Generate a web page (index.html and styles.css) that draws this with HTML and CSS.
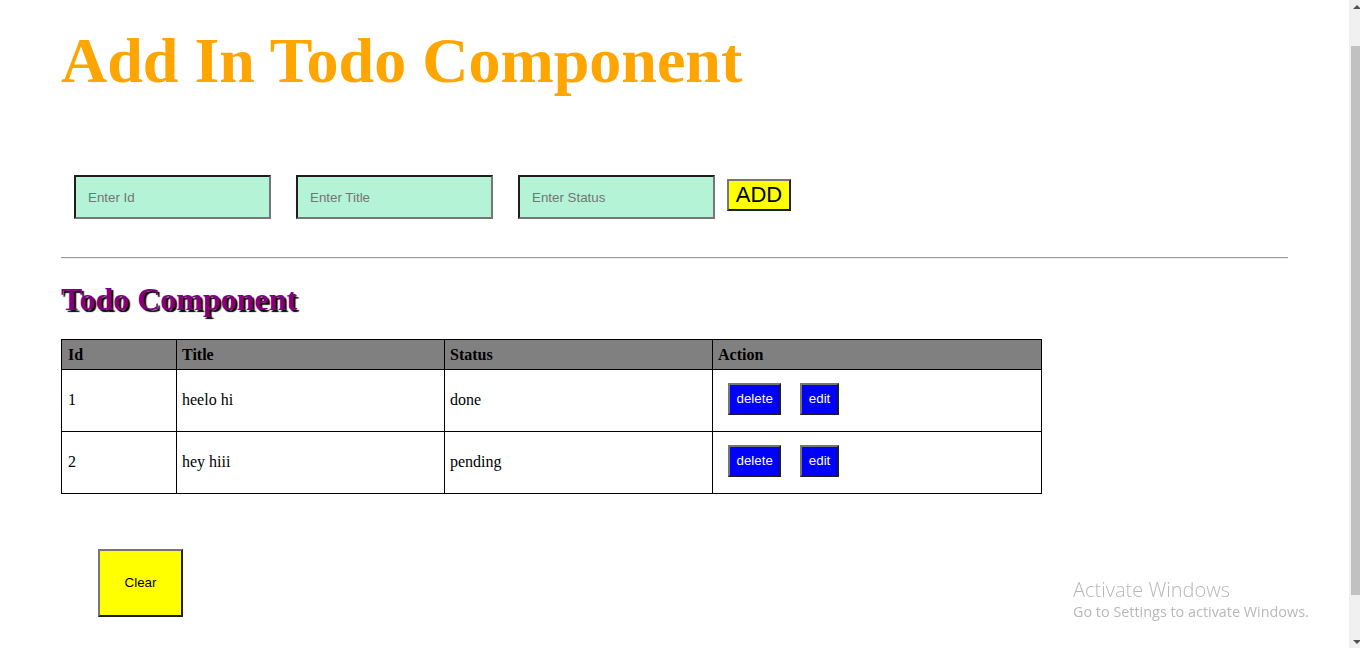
FILE: index.html
```html
<!DOCTYPE html>
<html lang="en">
<head>
<meta charset="utf-8">
<title>Todo</title>
<link rel="stylesheet" href="styles.css">
</head>
<body>
<div class="container">
  <h1 class="title">Add In Todo Component</h1>
  <div class="form">
    <input class="field" type="text" placeholder="Enter Id">
    <input class="field" type="text" placeholder="Enter Title">
    <input class="field last" type="text" placeholder="Enter Status">
    <button class="add-btn">ADD</button>
  </div>
  <hr class="divider">
  <h2 class="subtitle">Todo Component</h2>
  <table class="todo-table">
    <colgroup>
      <col class="c-id"><col class="c-title"><col class="c-status"><col class="c-action">
    </colgroup>
    <thead>
      <tr><th>Id</th><th>Title</th><th>Status</th><th>Action</th></tr>
    </thead>
    <tbody>
      <tr>
        <td>1</td><td>heelo hi</td><td>done</td>
        <td class="action-cell"><div class="actions"><button class="blue-btn">delete</button><button class="blue-btn">edit</button></div></td>
      </tr>
      <tr>
        <td>2</td><td>hey hiii</td><td>pending</td>
        <td class="action-cell"><div class="actions"><button class="blue-btn">delete</button><button class="blue-btn">edit</button></div></td>
      </tr>
    </tbody>
  </table>
  <div class="clear-wrap"><button class="clear-btn">Clear</button></div>
</div>

<div class="watermark">
  <div class="wm-title">Activate Windows</div>
  <div class="wm-sub">Go to Settings to activate Windows.</div>
</div>

<div class="scrollbar">
  <div class="sb-arrow sb-up"></div>
  <div class="sb-thumb"></div>
  <div class="sb-arrow sb-down"></div>
</div>
</body>
</html>
```

FILE: styles.css
```css
html {
  overflow: hidden;
}
body {
  margin: 8px;
  font-family: "Liberation Serif", "Times New Roman", serif;
  background: #fff;
  color: #000;
}
.container {
  margin-left: 53px;
  width: 1227px;
}
.title {
  font-size: 64px;
  font-weight: bold;
  color: #ffa500;
  margin: 16px 0 0;
}
.form {
  display: flex;
  align-items: flex-start;
  padding: 77px 0 0 13px;
  height: 44px;
}
.field {
  box-sizing: border-box;
  width: 197px;
  height: 44px;
  margin: 0 25px 0 0;
  padding: 0 12px;
  background: #b4f3d6;
  border: 2px solid;
  border-color: #1e1e1e #767676 #767676 #1e1e1e;
  font-family: "Liberation Sans", Arial, sans-serif;
  font-size: 13.33px;
  color: #000;
  outline: none;
}
.field::placeholder {
  color: #757575;
}
.field.last {
  margin-right: 12px;
}
.add-btn {
  box-sizing: border-box;
  margin-top: 4px;
  width: 64px;
  height: 32px;
  padding: 0;
  background: #ffff00;
  border: 2px solid;
  border-color: #767676 #1e1e1e #1e1e1e #767676;
  font-family: "Liberation Sans", Arial, sans-serif;
  font-size: 22px;
  color: #000;
  line-height: 1;
}
.divider {
  margin: 38px 0 0;
  border: 0;
  border-top: 1px solid #9a9a9a;
  border-bottom: 1px solid #eeeeee;
  height: 0;
}
.subtitle {
  font-size: 32px;
  font-weight: bold;
  color: #800080;
  text-shadow: 2px 2px 1px #000;
  margin: 22px 0 21px;
}
.todo-table {
  width: 980px;
  border-collapse: collapse;
  border: 1px solid #000;
  table-layout: fixed;
  font-size: 16px;
}
.c-id { width: 115px; }
.c-title { width: 268px; }
.c-status { width: 268px; }
.c-action { width: 329px; }
.todo-table th {
  background: #808080;
  border: 1px solid #000;
  text-align: left;
  font-weight: bold;
  padding: 6px 5px 4.5px 6px;
  line-height: 18px;
}
.todo-table td {
  border: 1px solid #000;
  padding: 6px 5px 6px 6px;
  line-height: 18px;
  vertical-align: middle;
}
.todo-table td:not(:first-child),
.todo-table th:not(:first-child) {
  padding-left: 5px;
}
.actions {
  display: flex;
  gap: 19px;
  padding: 7px 0 10px 10px;
}
.blue-btn {
  box-sizing: border-box;
  height: 32px;
  padding: 0 6.5px;
  background: #0000ff;
  color: #fff;
  border: 2px solid;
  border-color: #767676 #1e1e1e #1e1e1e #767676;
  font-family: "Liberation Sans", Arial, sans-serif;
  font-size: 13.33px;
}
.clear-wrap {
  padding: 55px 0 0 37px;
}
.clear-btn {
  box-sizing: border-box;
  width: 85px;
  height: 68px;
  background: #ffff00;
  border: 2px solid;
  border-color: #767676 #1e1e1e #1e1e1e #767676;
  font-family: "Liberation Sans", Arial, sans-serif;
  font-size: 13.33px;
  color: #000;
}
.watermark {
  position: fixed;
  left: 1073px;
  top: 578px;
  font-family: "Open Sans", "Noto Sans", sans-serif;
  color: #b8b8b8;
  line-height: 1.2;
}
.wm-title {
  font-size: 20px;
  font-weight: 300;
}
.wm-sub {
  font-size: 14.4px;
  margin-top: 1px;
}
.scrollbar {
  position: fixed;
  top: 0;
  right: 0;
  width: 11px;
  height: 648px;
  background: #f0f0f0;
}
.sb-thumb {
  position: absolute;
  left: 2px;
  right: 0;
  top: 46px;
  height: 549px;
  background: #c1c1c1;
}
.sb-arrow {
  position: absolute;
  left: 4px;
  width: 0;
  height: 0;
  border-left: 4px solid transparent;
  border-right: 4px solid transparent;
}
.sb-up {
  top: 5px;
  border-bottom: 4px solid #505050;
}
.sb-down {
  bottom: 4px;
  border-top: 4px solid #505050;
}
```
